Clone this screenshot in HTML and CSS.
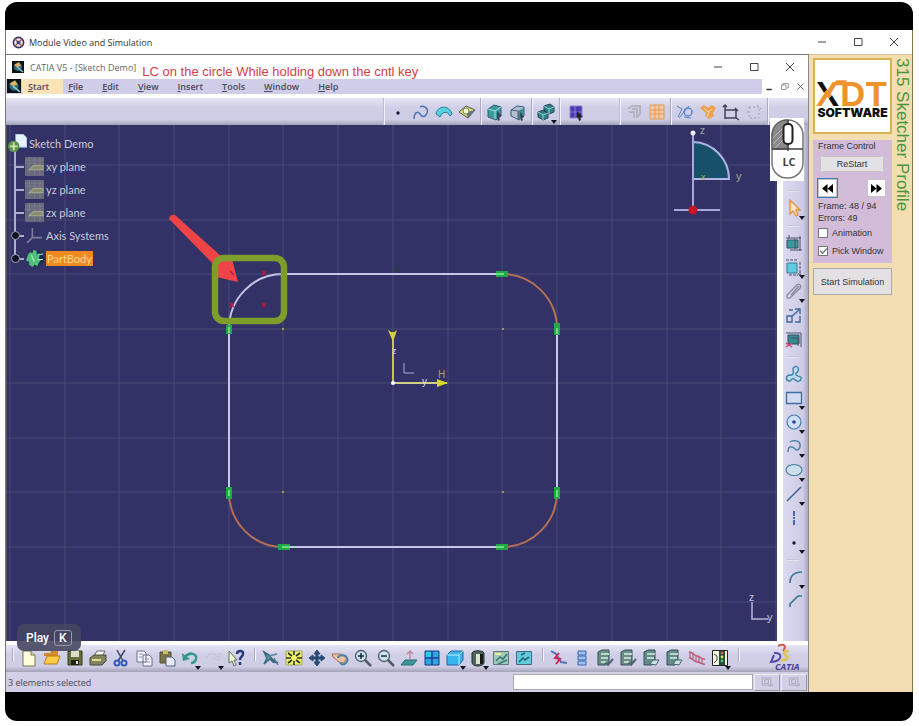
FILE: index.html
```html
<!DOCTYPE html>
<html lang="en">
<head>
<meta charset="utf-8">
<title>Module Video and Simulation</title>
<link rel="stylesheet" href="styles.css">
</head>
<body>
<svg class="defs" aria-hidden="true">
  <symbol id="min" viewBox="0 0 12 12"><path d="M2 6h8" stroke="#444" fill="none"/></symbol>
  <symbol id="max" viewBox="0 0 12 12"><path d="M2.500 2.500h7.500v7h-7.500z" stroke="#444" fill="none"/></symbol>
  <symbol id="x" viewBox="0 0 12 12"><path d="M2 2l8 8M10 2l-8 8" stroke="#444" fill="none"/></symbol>
  <symbol id="app" viewBox="0 0 12 12"><path d="M0 0h12v12H0z" fill="#0a1218"/><circle cx="6" cy="6" r="4" fill="#2d6878"/><path d="M2 4l5-3 2 4-4 1z" fill="#e0b060"/><path d="M5 6l6 5" stroke="#86c4d4" stroke-width="1.500"/></symbol>
  <symbol id="dot" viewBox="0 0 18 18"><circle cx="9" cy="10" r="1.700" fill="#1b1b3a"/></symbol>
  <symbol id="curve" viewBox="0 0 18 18"><path d="M2 16C2 9 6 8 8 11s5 4 7-1-4-8-7-6" fill="none" stroke="#4e75b0" stroke-width="1.500"/></symbol>
  <symbol id="surf" viewBox="0 0 18 18"><path d="M1 11C2 3 14 1 17 11l-2 2C13 8 7 8 5 14z" fill="#55d2e2" stroke="#277a94"/></symbol>
  <symbol id="solid" viewBox="0 0 18 18"><path d="M1 9l7-6 9 4-7 8z" fill="#e8df6a" stroke="#555"/><path d="M8 9l9-2-7 8z" fill="#62777a"/><circle cx="8" cy="8" r="3" fill="#eef6cf" stroke="#6b8c6d"/></symbol>
  <symbol id="cube" viewBox="0 0 18 18"><path d="M2 6l6-4 7 2v9l-5 4-8-3z" fill="#3d9b9e" stroke="#355b70"/><path d="M2 6l7 2v8M9 8l6-4" stroke="#a6e0dd" fill="none"/><path d="M11 8l5 5-3 1 1 3-2 1-1-4z" fill="#3a4560"/></symbol>
  <symbol id="cube2" viewBox="0 0 18 18"><path d="M2 7l6-4 7 1v9l-5 4-8-4z" fill="#b3bfd0" stroke="#355b70"/><path d="M9 8l6-3v8l-6 4z" fill="#3d8990"/><path d="M2 7l7 1v8" stroke="#526070" fill="none"/><path d="M11 9l4 5-2 1 1 2-2 1z" fill="#333b55"/></symbol>
  <symbol id="cubes" viewBox="0 0 18 18"><path d="M1 9l6-2 4 3v5l-5 2-5-3zM7 3l6-2 4 3v5l-5 2-5-3z" fill="#347e86" stroke="#24455c"/><path d="M1 9l5 3v5M6 12l5-2M7 3l5 3v5M12 6l5-2" stroke="#8fd1d0" fill="none"/></symbol>
  <symbol id="select" viewBox="0 0 18 18"><path d="M3 3h12v12H3z" fill="#4939ac" stroke="#8684d2"/><path d="M8 3v12M3 9h12" stroke="#8580e0"/><path d="M10 8l6 6-3 0 1 3-2 1-1-4-1 1z" fill="#222"/></symbol>
  <symbol id="ghost" viewBox="0 0 18 18"><path d="M3 6l4-3h8v8l-3 3M7 6h5v9M4 9h5v6" fill="none" stroke="#b4b4c0" stroke-width="2"/></symbol>
  <symbol id="gridi" viewBox="0 0 18 18"><path d="M2 2h14v14H2zM2 7h14M2 11h14M7 2v14M11 2v14" fill="#f1c9a4" stroke="#e59958"/></symbol>
  <symbol id="constr" viewBox="0 0 18 18"><circle cx="12" cy="9" r="4" fill="none" stroke="#5c86c5" stroke-width="1.500"/><path d="M1 3l5 3-4 8M3 15L13 3M8 14l7 1" fill="none" stroke="#5c86c5"/></symbol>
  <symbol id="orange" viewBox="0 0 18 18"><path d="M1 5l4-3 4 3 4-3 4 3-3 5 1 3-5 3-4-3 1-3z" fill="#efa04c"/><path d="M5 5l4 4 4-3M8 14l2-5" stroke="#fae0b8" fill="none"/></symbol>
  <symbol id="dim" viewBox="0 0 18 18"><path d="M3 2v14M3 7h11v8H3M1 4l2-2 2 2M13 5l3 3M13 14l4 3" fill="none" stroke="#41435a" stroke-width="1.500"/></symbol>
  <symbol id="dash" viewBox="0 0 18 18"><path d="M4 4h10v11H4zM2 9h4M12 2l4 4" fill="none" stroke="#a0a0b8" stroke-dasharray="2 2"/></symbol>
  <symbol id="arrow" viewBox="0 0 18 18"><path d="M5 1v14l3-3 3 5 2-1-2-5h4z" fill="#fbe7c5" stroke="#e58d38" stroke-width="1.300"/></symbol>
  <symbol id="boxc" viewBox="0 0 18 18"><path d="M2 6h11v8H2z" fill="#3a9b9c" stroke="#365065"/><path d="M1 4h15M15 2v15M4 1v4M5 16h12M10 5v10" fill="none" stroke="#485269"/></symbol>
  <symbol id="box2" viewBox="0 0 18 18"><path d="M2 5h10v10H2z" fill="#60cbdc" stroke="#357d94"/><path d="M1 2h12M15 4v13M13 16h4M4 17h9" stroke="#41506b" fill="none" stroke-dasharray="3 1"/></symbol>
  <symbol id="clip" viewBox="0 0 18 18"><path d="M3 12L12 3c2-2 5 0 3 3L6 15c-3 3-6 0-3-3M6 13l8-9" fill="none" stroke="#8a8a9e" stroke-width="1.300"/></symbol>
  <symbol id="link" viewBox="0 0 18 18"><path d="M2 10h5v6H2zM6 11l8-7M10 3h5v5M4 4h4M15 10v6h-5" fill="none" stroke="#42689c" stroke-width="1.400"/></symbol>
  <symbol id="boxr" viewBox="0 0 18 18"><path d="M3 5h11v9H3z" fill="#36898d" stroke="#365065"/><path d="M1 3h15v14M6 8h7v8" fill="none" stroke="#4b5570"/><path d="M1 13l6 4M7 13l-6 4" stroke="#e14268" stroke-width="1.500"/></symbol>
  <symbol id="profile" viewBox="0 0 18 18"><path d="M8 4C9 0 15 1 13 6c-1 2-3 2-2 4 2 2 6 1 5 4-1 4-5 2-7 0s-3 3-5 2c-4-1-3-6 1-6 3 1 4-2 3-6" fill="#c5d9ee" stroke="#4187b0" stroke-width="1.500"/></symbol>
  <symbol id="rect" viewBox="0 0 18 18"><path d="M1.500 3.500h15v11h-15z" fill="#d1dcf0" stroke="#3c6ea0" stroke-width="1.300"/></symbol>
  <symbol id="circle" viewBox="0 0 18 18"><circle cx="9" cy="9" r="7" fill="#cfdef3" stroke="#447caf" stroke-width="1.200"/><circle cx="9" cy="9" r="1.800" fill="#2442a0"/></symbol>
  <symbol id="spline" viewBox="0 0 18 18"><path d="M3 15c0-8 5-5 7-3s6 0 5-5c-1-4-8-4-10-2" fill="none" stroke="#5282aa" stroke-width="1.500"/></symbol>
  <symbol id="ellipse" viewBox="0 0 18 18"><ellipse cx="9" cy="9" rx="8" ry="5.500" fill="#cddfea" stroke="#43809f" stroke-width="1.200"/></symbol>
  <symbol id="line" viewBox="0 0 18 18"><path d="M2 16L16 2" stroke="#3c5d8f" stroke-width="1.500"/></symbol>
  <symbol id="axis" viewBox="0 0 18 18"><path d="M9 2v14" stroke="#4469b7" stroke-width="2" stroke-dasharray="5 1 2 1"/></symbol>
  <symbol id="corner" viewBox="0 0 18 18"><path d="M5 15C5 8 9 4 17 4" fill="none" stroke="#397994" stroke-width="1.700"/></symbol>
  <symbol id="chamfer" viewBox="0 0 18 18"><path d="M5 15v-3l8-8h4" fill="none" stroke="#397994" stroke-width="1.700"/></symbol>
  <symbol id="new" viewBox="0 0 18 18"><path d="M3 2h8l4 4v11H3z" fill="#fffedb" stroke="#77775a"/><path d="M11 2v4h4" fill="#ddd9a8" stroke="#77775a"/></symbol>
  <symbol id="open" viewBox="0 0 18 18"><path d="M1 4h6l1-2h7v5H1z" fill="#d18e27"/><path d="M1 15l3-8h13l-3 8z" fill="#f8cd43" stroke="#b87920"/></symbol>
  <symbol id="save" viewBox="0 0 18 18"><path d="M2 2h14v14H2z" fill="#67703a" stroke="#34391d"/><path d="M5 2h8v6H5z" fill="#dcdecc"/><path d="M5 11h8v5H5z" fill="#22251a"/><path d="M10 12h2v3h-2z" fill="#ddd"/></symbol>
  <symbol id="print" viewBox="0 0 18 18"><path d="M5 7l3-5h8l-3 6z" fill="#fafafa" stroke="#666"/><path d="M1 9l4-3h12v6l-4 4H1z" fill="#818363" stroke="#4b4d38"/><path d="M3 11h9" stroke="#e0da85" stroke-width="2"/></symbol>
  <symbol id="cut" viewBox="0 0 18 18"><path d="M5 1l6 11M13 1L6 12" stroke="#3d4962" stroke-width="1.500"/><circle cx="5" cy="14" r="2.500" fill="none" stroke="#3159bf" stroke-width="2"/><circle cx="12" cy="14" r="2.500" fill="none" stroke="#3159bf" stroke-width="2"/></symbol>
  <symbol id="copy" viewBox="0 0 18 18"><path d="M2 2h7l2 2v9H2zM8 6h6l3 3v8H8z" fill="#f4f5fc" stroke="#68718b"/><path d="M4 5h4M4 8h3M10 10h4M10 13h5" stroke="#8290b8"/></symbol>
  <symbol id="paste" viewBox="0 0 18 18"><path d="M2 3h11v11H2z" fill="#7b7545" stroke="#4f4e31"/><path d="M5 1h5v4H5z" fill="#c5bd76"/><path d="M8 8h6l3 3v6H8z" fill="#e8ebf6" stroke="#536080"/></symbol>
  <symbol id="undo" viewBox="0 0 18 18"><path d="M4 8c5-6 12-3 11 2-1 3-3 4-5 4" fill="none" stroke="#359989" stroke-width="2.500"/><path d="M1 4l1 8 7-2z" fill="#359989"/></symbol>
  <symbol id="redo" viewBox="0 0 18 18"><path d="M14 8C9 2 2 5 3 10M16 4l-1 7-6-2" fill="none" stroke="#c3c3d2" stroke-width="1.500" stroke-dasharray="2 1"/></symbol>
  <symbol id="help" viewBox="0 0 18 18"><path d="M2 2v12l3-2 2 5 2-1-2-5h3z" fill="#f6f6d8" stroke="#58705b"/><path d="M10 5c0-4 7-4 6 0 0 3-3 2-3 6M13 13v3" fill="none" stroke="#273a7b" stroke-width="2.500"/></symbol>
  <symbol id="fly" viewBox="0 0 18 18"><path d="M2 3l5 3 4 5 5 3-5-1-3-3-6 5 3-6z" fill="#51a0aa" stroke="#3c687a" stroke-width="1.500"/><path d="M3 8l12-3M12 9l4 7" stroke="#59839c" stroke-width="1.500"/></symbol>
  <symbol id="fit" viewBox="0 0 18 18"><path d="M1 2h16v14H1z" fill="#f2ee66" stroke="#9ba466"/><path d="M3 4l4 3M15 4l-4 3M3 14l4-3M15 14l-4-3M9 2v4M9 12v4M1 9h5M12 9h5" stroke="#26351e" stroke-width="1.600"/></symbol>
  <symbol id="pan" viewBox="0 0 18 18"><path d="M9 1l3 4h-2v3h3V6l4 3-4 3v-2h-3v3h2l-3 4-3-4h2v-3H5v2L1 9l4-3v2h3V5H6z" fill="#2b4873" stroke="#2b4873"/></symbol>
  <symbol id="rotate" viewBox="0 0 18 18"><path d="M1 5h9l6 4-3 5-5-1-6-5z" fill="#e9c3a1" stroke="#a66d5c"/><path d="M7 9c0-3 7-4 9 0s-4 9-7 5" fill="none" stroke="#4b80a4" stroke-width="2"/></symbol>
  <symbol id="zin" viewBox="0 0 18 18"><path d="M10 10l7 7" stroke="#555d66" stroke-width="2.500"/><circle cx="7" cy="7" r="5.500" fill="#cde1ec" stroke="#455969" stroke-width="1.300"/><path d="M4 7h6M7 4v6" stroke="#18273a" stroke-width="1.500"/></symbol>
  <symbol id="zout" viewBox="0 0 18 18"><path d="M10 10l7 7" stroke="#555d66" stroke-width="2.500"/><circle cx="7" cy="7" r="5.500" fill="#cde1ec" stroke="#455969" stroke-width="1.300"/><path d="M4 7h6" stroke="#18273a" stroke-width="1.500"/></symbol>
  <symbol id="normal" viewBox="0 0 18 18"><path d="M1 16l4-5h12l-4 5z" fill="#3a9998" stroke="#2b6b75"/><path d="M10 11V3M7 5l3-3 3 3" stroke="#be8494" fill="none" stroke-width="1.300"/></symbol>
  <symbol id="multi" viewBox="0 0 18 18"><path d="M2 2h14v14H2z" fill="#2ba7e0" stroke="#183b83"/><path d="M9 2v14M2 9h14" stroke="#263e99" stroke-width="1.500"/><path d="M3 3h5v5H3z" fill="#28ced9"/></symbol>
  <symbol id="iso" viewBox="0 0 18 18"><path d="M1 6l4-4h12v9l-4 5H1z" fill="#37b5ec" stroke="#2462a5"/><path d="M1 6h12v10M13 6l4-4" fill="none" stroke="#bdefff"/></symbol>
  <symbol id="shade" viewBox="0 0 18 18"><path d="M3 4c1-3 11-3 12 0v10c-1 4-11 4-12 0z" fill="#526460" stroke="#27322f"/><path d="M7 5h4v10H7z" fill="#dce7cd"/><path d="M11 5h3v10h-3z" fill="#151a18"/></symbol>
  <symbol id="hide" viewBox="0 0 18 18"><path d="M1.500 2.500h15v13h-15z" fill="#9fc7ba" stroke="#637777"/><path d="M4 12l4-4 3 2 4-5M6 15l9-4" stroke="#397c7b" fill="none" stroke-width="1.700"/><path d="M3 5h6" stroke="#f3ed9d" stroke-width="2"/></symbol>
  <symbol id="swap" viewBox="0 0 18 18"><path d="M1.500 2.500h15v13h-15z" fill="#63cbdc" stroke="#46677e"/><path d="M4 13l4-4 2 2 4-3M6 6l4-2" stroke="#246777" fill="none" stroke-width="1.700"/></symbol>
  <symbol id="knife" viewBox="0 0 18 18"><path d="M1 2l5 3 5 8 6 1" stroke="#586fb0" stroke-width="2" fill="none"/><path d="M9 4l-4 5 5 1-4 5" stroke="#cf2953" stroke-width="2" fill="none"/></symbol>
  <symbol id="stack" viewBox="0 0 18 18"><path d="M5 2h8v4H5zM5 7h8v4H5zM5 12h8v4H5z" fill="#9fbff0" stroke="#3f67ad"/></symbol>
  <symbol id="sheet" viewBox="0 0 18 18"><path d="M2 3l4-2h7v12l-3 3H2z" fill="#6b8d83" stroke="#354e5a"/><path d="M5 5h8M5 9h7M5 13h5" stroke="#d8efe4" stroke-width="1.500"/><path d="M9 14l3 2 5-6" stroke="#506470" fill="none" stroke-width="2"/></symbol>
  <symbol id="sheet2" viewBox="0 0 18 18"><path d="M2 3l4-2h7v12l-3 3H2z" fill="#628c8a" stroke="#354e5a"/><path d="M5 5h8M5 9h7" stroke="#d8efe4" stroke-width="1.500"/><path d="M8 15l3-4h6l-3 5z" fill="#cde2e3" stroke="#47626b"/></symbol>
  <symbol id="wave" viewBox="0 0 18 18"><path d="M1 3c4-1 4 4 8 4s4 4 8 3M1 9c4-1 4 4 8 4s4 3 8 2" fill="none" stroke="#c05a70" stroke-width="1.500"/><path d="M2 3v6M5 4v6M8 7v6M11 8v5M14 10v5" stroke="#b24e66"/></symbol>
  <symbol id="traffic" viewBox="0 0 18 18"><path d="M1.500 1.500h15v15h-15z" fill="#f4f4df" stroke="#222"/><path d="M8 2h6v14H8z" fill="#25493b"/><circle cx="11" cy="4" r="1.400" fill="#d54"/><circle cx="11" cy="8" r="1.400" fill="#dd5"/><circle cx="11" cy="12" r="1.400" fill="#4c6"/><path d="M3 5l3 2v4l-3 3" stroke="#445" fill="none"/></symbol>
  <symbol id="grey" viewBox="0 0 18 18"><path d="M3 4h11v9H3zM6 6h5v5H6zM11 14h5v-3" fill="none" stroke="#a3a3b2"/></symbol>
  <symbol id="plane" viewBox="0 0 18 18"><path d="M0 0h18v18H0z" fill="#69697c"/><path d="M0 3h18M0 6h18M4 0v18M9 0v18M14 0v18" stroke="#85859a" stroke-dasharray="1 1"/><path d="M4 12l4-4h9v4z" fill="#878b72" stroke="#a7aa8c"/></symbol>
</svg>

<main class="video">
  <section class="module">
    <header class="titlebar">
      <svg class="mark" viewBox="0 0 14 14"><circle cx="7" cy="7" r="5.500" fill="#f2e5e0" stroke="#343464" stroke-width="1.700"/><path d="M3 3l8 8M11 3l-8 8" stroke="#a25748" stroke-width="1.500"/><circle cx="7" cy="7" r="2" fill="#35478d"/></svg>
      <h1>Module Video and Simulation</h1>
      <div class="controls">
        <button aria-label="Minimize module"><svg><use href="#min"/></svg></button>
        <button aria-label="Maximize module"><svg><use href="#max"/></svg></button>
        <button aria-label="Close module"><svg><use href="#x"/></svg></button>
      </div>
    </header>
    <div class="body">
      <section class="catia">
        <header class="titlebar app-title">
          <svg class="mark"><use href="#app"/></svg>
          <h2>CATIA V5 - [Sketch Demo]</h2>
          <p class="hint">LC on the circle While holding down the cntl key</p>
          <div class="controls">
            <button aria-label="Minimize"><svg><use href="#min"/></svg></button>
            <button aria-label="Maximize"><svg><use href="#max"/></svg></button>
            <button aria-label="Close"><svg><use href="#x"/></svg></button>
          </div>
        </header>
        <nav class="menu">
          <svg class="menu-mark"><use href="#app"/></svg>
          <button class="start"><u>S</u>tart</button><button><u>F</u>ile</button><button><u>E</u>dit</button><button><u>V</u>iew</button><button><u>I</u>nsert</button><button><u>T</u>ools</button><button><u>W</u>indow</button><button><u>H</u>elp</button>
          <div class="mdi">
            <button aria-label="Minimize sketch"><svg viewBox="0 0 12 12"><path d="M2 10h7" stroke="#333" stroke-width="2"/></svg></button>
            <button aria-label="Restore sketch"><svg viewBox="0 0 12 12"><path d="M4 4V2h7v6H9M2 4h6v6H2z" stroke="#777" fill="none"/></svg></button>
            <button aria-label="Close sketch"><svg><use href="#x"/></svg></button>
          </div>
        </nav>
        <div class="toolbar top">
          <div class="group soft lead"></div>
          <div class="group"><button aria-label="Point filter"><svg><use href="#dot"/></svg></button><button aria-label="Curve filter"><svg><use href="#curve"/></svg></button><button aria-label="Surface filter"><svg><use href="#surf"/></svg></button><button aria-label="Volume filter"><svg><use href="#solid"/></svg></button></div>
          <div class="group"><button aria-label="Feature filter"><svg><use href="#cube"/></svg></button><button aria-label="Geometry filter"><svg><use href="#cube2"/></svg></button></div>
          <div class="group"><button class="more" aria-label="Work support"><svg><use href="#cubes"/></svg></button></div>
          <div class="group soft single"><button aria-label="Selection mode"><svg><use href="#select"/></svg></button></div>
          <div class="group"><button aria-label="3D grid"><svg><use href="#ghost"/></svg></button><button aria-label="Grid"><svg><use href="#gridi"/></svg></button></div>
          <div class="group"><button aria-label="Construction element"><svg><use href="#constr"/></svg></button><button aria-label="Geometrical constraints"><svg><use href="#orange"/></svg></button><button aria-label="Dimensional constraints"><svg><use href="#dim"/></svg></button><button aria-label="Automatic dimensions"><svg><use href="#dash"/></svg></button></div>
        </div>
        <div class="work">
          <div class="canvas">
            <svg class="drawing" viewBox="7 125 770 516" preserveAspectRatio="xMinYMin slice" role="img" aria-label="Rounded rectangle sketch">
              <path d="M10 125v600M65 125v600M119 125v600M174 125v600M229 125v600M283 125v600M338 125v600M393 125v600M448 125v600M502 125v600M557 125v600M612 125v600M667 125v600M721 125v600M776 125v600M7 165h900M7 220h900M7 274h900M7 329h900M7 383h900M7 438h900M7 492h900M7 547h900M7 602h900" stroke="#484a76" fill="none"/>
              <path d="M283 274H502M557 329V492M502 547H283M229 492V329" stroke="#c6c7e8" stroke-width="2" fill="none"/>
              <path d="M229 329A54 55 0 0 1 283 274" stroke="#c2c3e4" stroke-width="2" fill="none"/>
              <path d="M502 274A55 55 0 0 1 557 329M557 492A55 55 0 0 1 502 547M283 547A54 55 0 0 1 229 492" stroke="#b66f54" stroke-width="2" fill="none"/>
              <path d="M496 274h12M557 323v12M557 487v12M496 547h12M278 547h12M229 487v12M229 325v9" stroke="#22a849" stroke-width="6"/>
              <path d="M496 274h8M557 328v6M557 490v7M496 547h8M282 547h8M229 490v6M229 327v6" stroke="#68de7d" stroke-width="2"/>
              <path d="M282 329h2M282 492h2M502 329h2M502 492h2" stroke="#91a344" stroke-width="2"/>
              <text x="394" y="272" font-size="9" fill="#1a4338">H</text>
              <path d="M393 383V332" stroke="#c7c849" stroke-width="2"/><path d="M388 330l5 12 4-12-4 3z" fill="#d2d13b"/>
              <path d="M393 383h54" stroke="#cfd084" stroke-width="2"/><path d="M437 379l11 4-11 4z" fill="#d7d722"/>
              <path d="M404 363v10h10" stroke="#a9abd0" fill="none"/><circle cx="393" cy="383" r="2" fill="#fff"/>
              <text x="392" y="354" font-size="9" fill="#cfd0e4">z</text><text x="422" y="385" font-size="10" fill="#d8d8e4">y</text><text x="438" y="378" font-size="10" fill="#9ca54c">H</text>
              <path d="M693 142A37 37 0 0 1 729 179H693z" fill="#165069" stroke="#b1b4e4" stroke-width="2"/>
              <path d="M693 133v77M674 210h46" stroke="#a6a8da" stroke-width="2"/><circle cx="693" cy="133" r="2.500" fill="#eef"/><circle cx="693" cy="210" r="4.500" fill="#c51622"/>
              <text x="700" y="134" font-size="10" fill="#9aab8f">z</text><text x="701" y="180" font-size="9" fill="#aab83c">x</text><text x="736" y="180" font-size="11" fill="#a5ad95">y</text>
              <path d="M752 602v17h16" stroke="#b6b7d7" fill="none" stroke-width="1.500"/><text x="749" y="601" font-size="10" fill="#c4c5e1">z</text><text x="767" y="621" font-size="11" fill="#c4c5e1">y</text>
              <path d="M175 221L218 260" stroke="#1c1c3e" stroke-width="8" opacity=".35"/>
              <path d="M169 219q1-5 6-4l46 41 11 3 6 23-22-5 1-9z" fill="#ee4448"/>
              <path d="M262 271l4 4M266 271l-4 4M230 303l4 4M234 303l-4 4M262 303l4 4M266 303l-4 4M230 271l4 4" stroke="#b51b3c" stroke-width="1.500"/>
              <rect x="215" y="258" width="69" height="63" rx="9" fill="none" stroke="#7f9d2b" stroke-width="6.500"/>
            </svg>
            <ul class="tree">
              <li class="root"><svg viewBox="0 0 20 20"><path d="M8 0h8l4 4v10H8z" fill="#e7f2ff" stroke="#7ca6d2"/><circle cx="6" cy="13" r="6" fill="#5c9548"/><path d="M2 13h8M6 9v8" stroke="#cce4a8" stroke-width="2"/></svg>Sketch Demo</li>
              <li><svg><use href="#plane"/></svg>xy plane</li>
              <li><svg><use href="#plane"/></svg>yz plane</li>
              <li><svg><use href="#plane"/></svg>zx plane</li>
              <li class="node"><svg viewBox="0 0 18 18"><path d="M7 2v9L2 16M7 11h9" stroke="#7c7d9b" fill="none" stroke-width="1.500"/></svg>Axis Systems</li>
              <li class="node"><svg viewBox="0 0 18 18"><circle cx="11" cy="9" r="7" fill="#132f45"/><path d="M3 5l2-2 2 1 1-3 3 1v3l3 1-1 3 2 2-2 2-1 3-3-1-2 2-3-2v-3l-3-1 1-3z" fill="#4ec27c"/><path d="M6 6l3 6M12 5h5M12 10h5" stroke="#b9ecc6"/></svg><mark>PartBody</mark></li>
            </ul>
            <div class="tip">Play <kbd>K</kbd></div>
          </div>
          <div class="toolbar side">
            <i></i>
            <button class="more" aria-label="Select"><svg><use href="#arrow"/></svg></button>
            <i></i>
            <button aria-label="Constraint dialog"><svg><use href="#boxc"/></svg></button><button class="more" aria-label="Constraint"><svg><use href="#box2"/></svg></button><button class="more" aria-label="Fix together"><svg><use href="#clip"/></svg></button><button aria-label="Animate constraint"><svg><use href="#link"/></svg></button><button aria-label="Edit multi-constraint"><svg><use href="#boxr"/></svg></button>
            <i></i>
            <button aria-label="Profile"><svg><use href="#profile"/></svg></button><button class="more" aria-label="Rectangle"><svg><use href="#rect"/></svg></button><button class="more" aria-label="Circle"><svg><use href="#circle"/></svg></button><button class="more" aria-label="Spline"><svg><use href="#spline"/></svg></button><button class="more" aria-label="Ellipse"><svg><use href="#ellipse"/></svg></button><button class="more" aria-label="Line"><svg><use href="#line"/></svg></button><button aria-label="Axis"><svg><use href="#axis"/></svg></button><button class="more" aria-label="Point"><svg><use href="#dot"/></svg></button>
            <i></i>
            <button class="more" aria-label="Corner"><svg><use href="#corner"/></svg></button><button aria-label="Chamfer"><svg><use href="#chamfer"/></svg></button>
          </div>
          <div class="mouse"><svg viewBox="0 0 34 63"><rect x="2" y="2" width="31" height="58" rx="15" fill="#fff" stroke="#777" stroke-width="1.500"/><path d="M17 2C7 2 2 10 2 18v13h16V2z" fill="#898989" stroke="#555"/><path d="M3 20L16 7M3 26l12-12M5 30L17 18" stroke="#bbb"/><path d="M2 31h31M18 2v31" stroke="#444" stroke-width="1.500"/><rect x="13.500" y="6" width="9" height="20" rx="4" fill="#fff" stroke="#222" stroke-width="2"/><text x="19" y="48" text-anchor="middle" font-size="11" font-weight="700" fill="#444">LC</text></svg></div>
        </div>
        <div class="toolbar bottom">
          <div class="group grip"><button aria-label="New"><svg><use href="#new"/></svg></button><button aria-label="Open"><svg><use href="#open"/></svg></button><button aria-label="Save"><svg><use href="#save"/></svg></button><button aria-label="Print"><svg><use href="#print"/></svg></button><button aria-label="Cut"><svg><use href="#cut"/></svg></button><button aria-label="Copy"><svg><use href="#copy"/></svg></button><button aria-label="Paste"><svg><use href="#paste"/></svg></button><button class="more" aria-label="Undo"><svg><use href="#undo"/></svg></button><button class="more" aria-label="Redo"><svg><use href="#redo"/></svg></button><button aria-label="What's this"><svg><use href="#help"/></svg></button></div>
          <div class="group grip"><button aria-label="Fly mode"><svg><use href="#fly"/></svg></button><button aria-label="Fit all in"><svg><use href="#fit"/></svg></button><button aria-label="Pan"><svg><use href="#pan"/></svg></button><button aria-label="Rotate"><svg><use href="#rotate"/></svg></button><button aria-label="Zoom in"><svg><use href="#zin"/></svg></button><button aria-label="Zoom out"><svg><use href="#zout"/></svg></button><button aria-label="Normal view"><svg><use href="#normal"/></svg></button><button aria-label="Multi-view"><svg><use href="#multi"/></svg></button><button class="more" aria-label="Isometric view"><svg><use href="#iso"/></svg></button><button class="more" aria-label="Shading"><svg><use href="#shade"/></svg></button><button aria-label="Hide or show"><svg><use href="#hide"/></svg></button><button aria-label="Swap visible space"><svg><use href="#swap"/></svg></button></div>
          <div class="group grip"><button aria-label="Cut part"><svg><use href="#knife"/></svg></button><button aria-label="Sketch analysis"><svg><use href="#stack"/></svg></button><button aria-label="Snap"><svg><use href="#sheet"/></svg></button><button aria-label="Check"><svg><use href="#sheet"/></svg></button><button aria-label="Visualize"><svg><use href="#sheet2"/></svg></button><button aria-label="Diagnostics"><svg><use href="#sheet2"/></svg></button><button aria-label="Porcupine"><svg><use href="#wave"/></svg></button><button class="more" aria-label="Solving status"><svg><use href="#traffic"/></svg></button></div>
          <div class="group grip brand"><svg viewBox="0 0 36 28"><path d="M9 2c6-3 9 0 5 5" fill="none" stroke="#d55752" stroke-width="2"/><path d="M5 9c9-1 9 8-3 9l3-7" fill="none" stroke="#554aa8" stroke-width="2"/><path d="M20 7c-8 0-5 4-2 5s-1 5-6 4" fill="none" stroke="#e2c453" stroke-width="2.500"/><text x="6" y="26" font-size="9" font-weight="700" font-style="italic" fill="#443f99">CATIA</text></svg></div>
        </div>
        <footer class="status"><label for="cmd">3 elements selected</label><input id="cmd" type="text"><button aria-label="Power input"><svg><use href="#grey"/></svg></button><button aria-label="Dialog"><svg><use href="#grey"/></svg></button></footer>
      </section>
      <aside class="panel">
        <div class="stack">
          <div class="logo"><svg viewBox="0 0 74 72" role="img" aria-label="XDT Software">
            <defs><linearGradient id="slash" gradientUnits="userSpaceOnUse" x1="3" y1="25" x2="23" y2="41"><stop offset=".36" stop-color="#111"/><stop offset=".36" stop-color="#ee922e"/><stop offset=".66" stop-color="#ee922e"/><stop offset=".66" stop-color="#111"/></linearGradient></defs>
            <text x="1" y="45" class="xdt" fill="url(#slash)">X</text>
            <path d="M21 20h10v5H18z" fill="#ee922e"/>
            <text x="25" y="45" class="xdt" fill="#ee922e">D</text><text x="50" y="45" class="xdt" fill="#ee922e">T</text>
            <text x="37" y="56" class="soft-word">SOFTWARE</text></svg></div>
          <section class="frame">
            <h3>Frame Control</h3>
            <button class="restart">ReStart</button>
            <div class="nav"><button class="on" aria-label="Back"><svg viewBox="0 0 14 12"><path d="M7 1v10L1 6zM13 1v10L7 6z"/></svg></button><button aria-label="Forward"><svg viewBox="0 0 14 12"><path d="M1 1v10l6-5zM7 1v10l6-5z"/></svg></button></div>
            <p>Frame: 48 / 94</p><p>Errors: 49</p>
            <label><input type="checkbox">Animation</label>
            <label><input type="checkbox" checked>Pick Window</label>
          </section>
          <button class="simulate">Start Simulation</button>
        </div>
        <h2 class="lesson">315 Sketcher Profile</h2>
      </aside>
    </div>
  </section>
</main>
</body>
</html>
```
FILE: styles.css
```css
* { box-sizing: border-box; }
body { margin: 0; padding: 2px 6px 5px 5px; background: #fff; font-family: "Open Sans", "Noto Sans", sans-serif; font-size: 9px; color: #333; }
h1, h2, h3, p, ul { margin: 0; padding: 0; font-weight: 400; font-size: inherit; }
button { padding: 0; border: 0; background: none; font: inherit; color: inherit; }
svg { display: block; }
.defs { display: none; }
.video { display: flex; min-height: calc(100vh - 7px); padding: 28px 0 29px; background: #000; border-radius: 12px; }
.module { flex: 1; min-width: 0; display: flex; flex-direction: column; background: #fff; border-left: 1px solid #777; border-right: 1px solid #8b7540; }
.titlebar { display: flex; align-items: center; height: 24px; padding-left: 6px; gap: 4px; flex: none; font-size: 9px; }
.mark { width: 13px; height: 13px; }
.controls { display: flex; margin-left: auto; height: 100%; }
.controls button { width: 36px; display: grid; place-items: center; }
.controls svg { width: 12px; height: 12px; }
.body { flex: 1; display: flex; min-height: 0; }
.catia { flex: 1; min-width: 0; display: flex; flex-direction: column; border-top: 1px solid #777; border-right: 1px solid #888; background: #fff; }
.app-title { gap: 6px; }
.app-title .mark { width: 12px; height: 12px; }
.app-title h2 { color: #666; }
.hint { color: #d43f45; font-family: "Liberation Sans", sans-serif; font-size: 13px; line-height: 15px; align-self: flex-end; white-space: nowrap; }
.menu { display: flex; height: 15px; flex: none; background: #cfcde8; }
.menu-mark { width: 16px; height: 14px; }
.menu > button { padding: 0 14px 0 5px; font-weight: 600; font-size: 9px; line-height: 14px; color: #4c4b5b; }
.menu .start { padding-left: 6px; background: #fae3b6; }
.mdi { display: flex; width: 46px; margin-left: auto; background: #fff; }
.mdi button { flex: 1; display: grid; place-items: center; }
.mdi svg { width: 9px; height: 9px; }
.toolbar { background: linear-gradient(#e6e5f4, #d0cfe8 35%, #cfcde6 80%, #a3a2b8); flex: none; }
.toolbar button { position: relative; width: 23px; height: 24px; display: grid; place-items: center; }
.toolbar button svg { width: 18px; height: 18px; }
.more::after { content: ""; position: absolute; right: 0; bottom: 0; border: 3px solid transparent; border-top: 4px solid #151520; border-bottom: 0; }
.top { display: flex; height: 27px; margin-top: 4px; }
.group { display: flex; align-items: center; padding: 0 2px; border-right: 1px solid #aaa9bf; box-shadow: 1px 0 #f2f1fb; }
.soft { border-right-color: #bdbcd2; }
.lead { width: 378px; }
.single { width: 60px; padding-left: 4px; }
.work { position: relative; flex: 1; display: flex; min-height: 0; }
.canvas { position: relative; flex: 1; min-width: 0; min-height: 516px; background: #333266; border-left: 1px solid #555; }
.drawing { position: absolute; inset: 0; width: 100%; height: 100%; font-family: "Liberation Sans", sans-serif; }
.tree { position: absolute; left: 7px; top: 7px; list-style: none; color: #c9cadb; font: 11px Lato, sans-serif; }
.tree::before { content: ""; position: absolute; left: 0; top: 14px; bottom: 12px; border-left: 2px solid #adaed0; }
.tree li { position: relative; display: flex; align-items: center; height: 23px; padding-left: 11px; gap: 2px; }
.tree li::before { content: ""; position: absolute; left: 0; width: 10px; border-top: 2px solid #adaed0; }
.tree svg { width: 19px; height: 19px; flex: none; }
.tree .root { padding: 0; }
.tree .root svg { position: relative; margin-left: -6px; }
.tree .node::after { content: ""; position: absolute; left: -3px; width: 7px; height: 7px; border: 1px solid #a2a3b8; border-radius: 50%; background: #111126; }
.tree mark { padding: 1px; background: #f18923; color: #ffd98c; }
.tip { position: absolute; left: 10px; bottom: -10px; z-index: 2; display: flex; align-items: center; gap: 5px; height: 27px; padding: 0 9px; border-radius: 7px; background: #454660e6; color: #fff; font: 500 12px Roboto, sans-serif; }
.tip kbd { padding: 0 4px; border: 1px solid #9999a8; border-radius: 3px; font: inherit; line-height: 14px; }
.side { width: 31px; padding: 60px 1px 0 0; border-left: 6px solid #fff; background: linear-gradient(90deg, #dad9ee, #cecce6 80%, #a9a8bd); }
.side i { display: block; height: 11px; margin: 0 8px 0 4px; background: linear-gradient(#b7b6cb, #f5f4fd) center / 100% 2px no-repeat; }
.side button { width: 22px; }
.mouse { position: absolute; right: 4px; top: -7px; width: 34px; height: 63px; background: #fff; }
.bottom { display: flex; height: 31px; border-top: 4px solid #fff; }
.bottom .group { padding: 0 1px 2px 6px; border: 0; box-shadow: none; }
.bottom .grip::before { content: ""; align-self: flex-start; width: 1px; height: 13px; margin: 3px 4px 0 0; background: #aaa9bd; box-shadow: 1px 0 #f7f6ff; }
.bottom .brand { flex: 1; justify-content: space-between; padding-right: 3px; }
.brand svg { width: 36px; height: 28px; overflow: visible; }
.status { display: flex; align-items: center; gap: 1px; height: 20px; padding: 1px; background: #d2cfe6; flex: none; }
.status label { flex: 1; font-size: 9px; padding-left: 1px; color: #4a4858; }
.status input { width: 240px; height: 16px; border: 1px solid #aaa; background: #fff; }
.status button { width: 26px; height: 17px; display: grid; place-items: center; border: 1px solid; border-color: #eee #999 #999 #eee; }
.status svg { width: 14px; height: 14px; }
.panel { display: flex; width: 103px; padding: 3px 0 0 4px; background: #f3deb2; border-top: 1px solid #d1c29b; font: 9px "Liberation Sans", sans-serif; }
.stack { width: 79px; }
.logo { height: 76px; border: 2px solid #d9b258; background: #fff; }
.xdt { font: 700 34px "Liberation Sans", sans-serif; }
.soft-word { font: 900 12px Inter, sans-serif; text-anchor: middle; fill: #111; }
.frame { display: flex; flex-direction: column; margin-top: 6px; padding: 0 6px 1px 5px; height: 123px; background: #d3bcd9; line-height: 12px; white-space: nowrap; }
.frame button, .simulate { background: #e4e1e5; border: 1px solid #c7c2c8; }
.restart { height: 16px; margin: 4px 2px 7px; }
.nav { display: flex; justify-content: space-between; margin-bottom: 3px; }
.nav button { width: 19px; height: 18px; display: grid; place-items: center; background: #fff; }
.nav .on { outline: 1px solid #367fb8; }
.nav svg { width: 13px; height: 11px; }
.frame label { display: flex; align-items: center; gap: 4px; height: 18px; }
.frame input { appearance: none; flex: none; width: 10px; height: 10px; margin: 0; border: 1px solid #777; background: #fff; }
.frame input:checked::after { content: ""; display: block; width: 6px; height: 3px; margin: 1px; border: solid #555; border-width: 0 0 1px 1px; transform: rotate(-45deg); }
.simulate { width: 100%; height: 27px; margin-top: 5px; border-color: #aaa; }
.lesson { writing-mode: vertical-rl; margin-left: auto; white-space: nowrap; color: #43963a; font-size: 17px; line-height: 20px; }
```
